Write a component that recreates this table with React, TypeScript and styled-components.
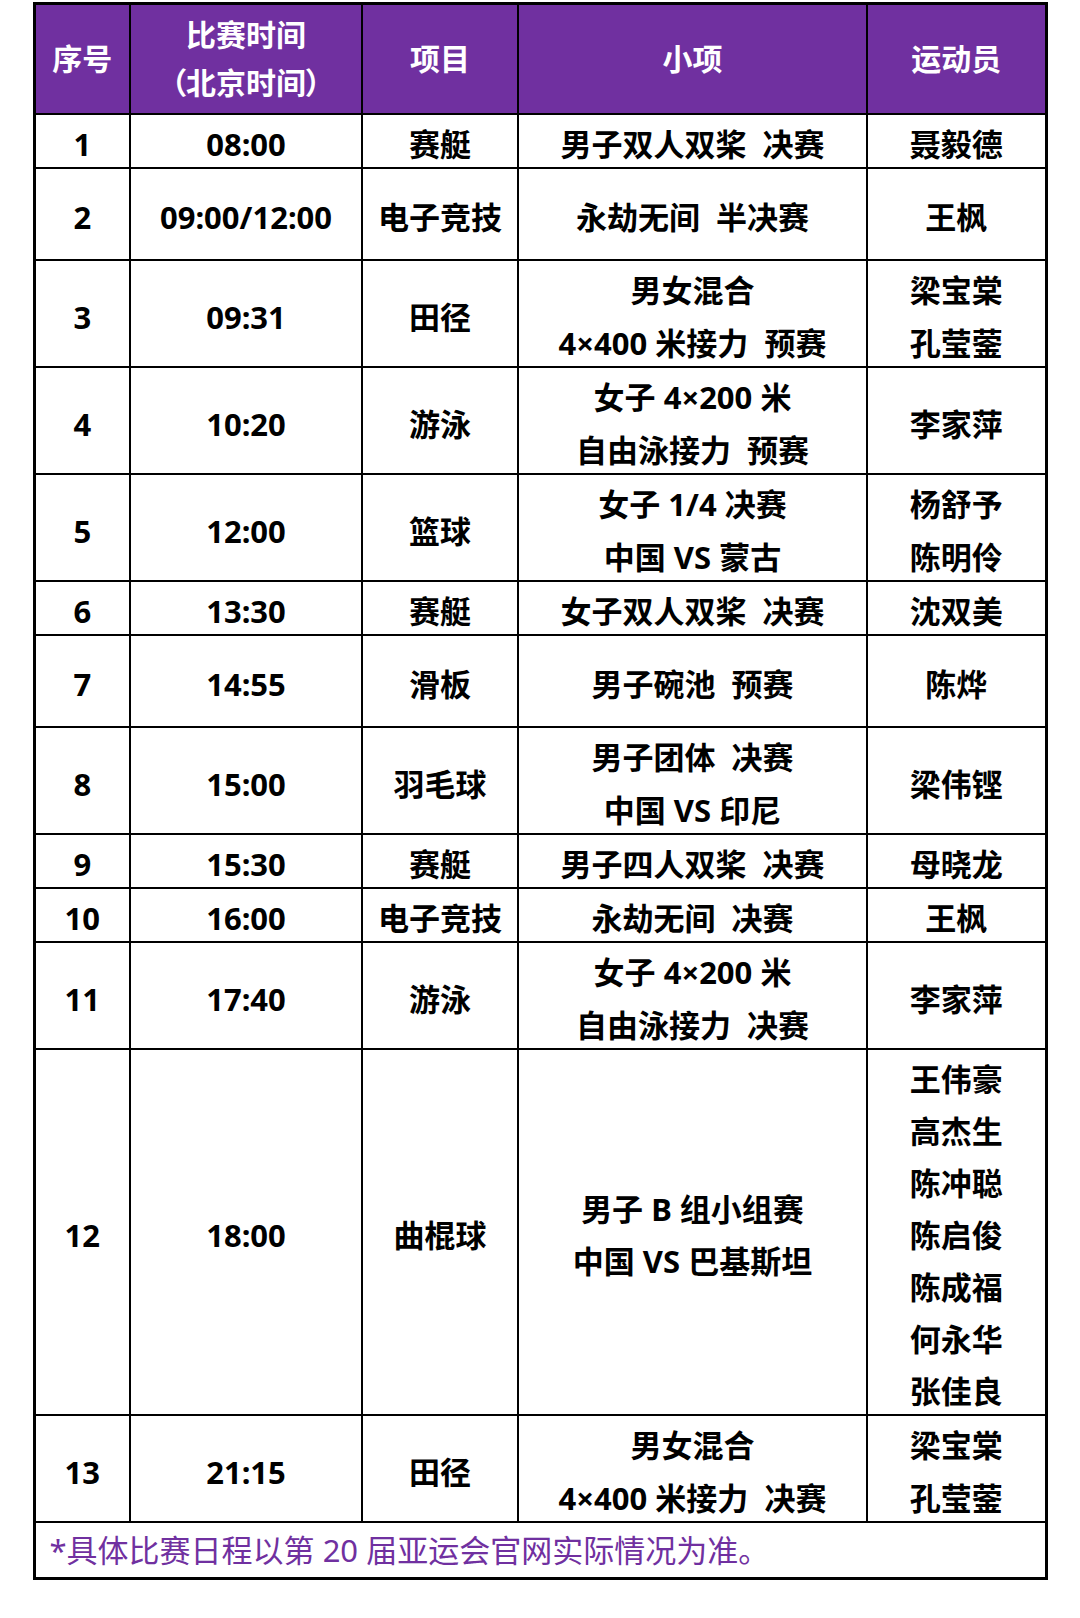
import React from 'react';
import styled, { createGlobalStyle } from 'styled-components';

const PURPLE = '#7030a0';

const GlobalStyle = createGlobalStyle`
    html, body {
        margin: 0;
        padding: 0;
        background: #fff;
    }
`;

const Page = styled.div`
    width: 1080px;
    min-height: 1618px;
    padding-top: 2px;
    box-sizing: border-box;
`;

const Table = styled.table`
    width: 1012px;
    margin: 0 auto;
    border-collapse: collapse;
    table-layout: fixed;
    border: 3px solid #000;
    font-family: 'Noto Sans', 'Noto Sans CJK SC', sans-serif;
`;

const Col = styled.col<{ $width: number }>`
    width: ${({ $width }) => $width}px;
`;

const HeadCell = styled.th`
    height: 108px;
    padding: 0;
    border: 2px solid #000;
    background: ${PURPLE};
    color: #fff;
    font-size: 30px;
    font-weight: 700;
    line-height: 48px;
    text-align: center;
    vertical-align: middle;
`;

/* full-width brackets squeezed to half width, as in the source table */
const Bracket = styled.span`
    font-feature-settings: 'palt';
`;

const Cell = styled.td<{ $tall?: boolean }>`
    height: ${({ $tall }) => ($tall ? '90px' : 'auto')};
    padding: 0;
    border: 2px solid #000;
    color: #000;
    font-size: 31px;
    font-weight: 700;
    text-align: center;
    vertical-align: middle;
    white-space: pre;
`;

/* one text line of a body cell: fixed slot, glyphs sit a little low */
const Line = styled.span<{ $slot?: number }>`
    display: block;
    box-sizing: border-box;
    height: ${({ $slot = 52 }) => $slot}px;
    padding-top: 6px;
    line-height: ${({ $slot = 52 }) => $slot - 6}px;
`;

const HeadLine = styled.span`
    display: block;
`;

const NoteCell = styled.td`
    height: 54px;
    padding: 0 14px;
    border: 2px solid #000;
    color: ${PURPLE};
    font-size: 31px;
    font-weight: 400;
    line-height: 52px;
    text-align: left;
    vertical-align: middle;
    white-space: pre;
`;

type Row = {
    no: string;
    time: string;
    sport: string;
    event: string[];
    athletes: string[];
    tall?: boolean;
};

const rows: Row[] = [
    { no: '1', time: '08:00', sport: '赛艇', event: ['男子双人双桨  决赛'], athletes: ['聂毅德'] },
    { no: '2', time: '09:00/12:00', sport: '电子竞技', event: ['永劫无间  半决赛'], athletes: ['王枫'], tall: true },
    { no: '3', time: '09:31', sport: '田径', event: ['男女混合', '4×400 米接力  预赛'], athletes: ['梁宝棠', '孔莹蓥'] },
    { no: '4', time: '10:20', sport: '游泳', event: ['女子 4×200 米', '自由泳接力  预赛'], athletes: ['李家萍'] },
    { no: '5', time: '12:00', sport: '篮球', event: ['女子 1/4 决赛', '中国 VS 蒙古'], athletes: ['杨舒予', '陈明伶'] },
    { no: '6', time: '13:30', sport: '赛艇', event: ['女子双人双桨  决赛'], athletes: ['沈双美'] },
    { no: '7', time: '14:55', sport: '滑板', event: ['男子碗池  预赛'], athletes: ['陈烨'], tall: true },
    { no: '8', time: '15:00', sport: '羽毛球', event: ['男子团体  决赛', '中国 VS 印尼'], athletes: ['梁伟铿'] },
    { no: '9', time: '15:30', sport: '赛艇', event: ['男子四人双桨  决赛'], athletes: ['母晓龙'] },
    { no: '10', time: '16:00', sport: '电子竞技', event: ['永劫无间  决赛'], athletes: ['王枫'] },
    { no: '11', time: '17:40', sport: '游泳', event: ['女子 4×200 米', '自由泳接力  决赛'], athletes: ['李家萍'] },
    {
        no: '12',
        time: '18:00',
        sport: '曲棍球',
        event: ['男子 B 组小组赛', '中国 VS 巴基斯坦'],
        athletes: ['王伟豪', '高杰生', '陈冲聪', '陈启俊', '陈成福', '何永华', '张佳良'],
    },
    { no: '13', time: '21:15', sport: '田径', event: ['男女混合', '4×400 米接力  决赛'], athletes: ['梁宝棠', '孔莹蓥'] },
];

const Lines = ({ items }: { items: string[] }) => (
    <>
        {items.map((text, i) => (
            <Line key={i} $slot={items.length === 2 ? 52.5 : 52}>
                {text}
            </Line>
        ))}
    </>
);

export default function App() {
    return (
        <Page>
            <GlobalStyle />
            <Table>
                <colgroup>
                    <Col $width={96} />
                    <Col $width={232} />
                    <Col $width={156} />
                    <Col $width={349} />
                    <Col $width={179} />
                </colgroup>
                <thead>
                    <tr>
                        <HeadCell>序号</HeadCell>
                        <HeadCell>
                            <HeadLine>比赛时间</HeadLine>
                            <HeadLine>
                                <Bracket>（</Bracket>北京时间<Bracket>）</Bracket>
                            </HeadLine>
                        </HeadCell>
                        <HeadCell>项目</HeadCell>
                        <HeadCell>小项</HeadCell>
                        <HeadCell>运动员</HeadCell>
                    </tr>
                </thead>
                <tbody>
                    {rows.map((row) => (
                        <tr key={row.no}>
                            <Cell $tall={row.tall}>
                                <Line>{row.no}</Line>
                            </Cell>
                            <Cell $tall={row.tall}>
                                <Line>{row.time}</Line>
                            </Cell>
                            <Cell $tall={row.tall}>
                                <Line>{row.sport}</Line>
                            </Cell>
                            <Cell $tall={row.tall}>
                                <Lines items={row.event} />
                            </Cell>
                            <Cell $tall={row.tall}>
                                <Lines items={row.athletes} />
                            </Cell>
                        </tr>
                    ))}
                    <tr>
                        <NoteCell colSpan={5}>*具体比赛日程以第 20 届亚运会官网实际情况为准。</NoteCell>
                    </tr>
                </tbody>
            </Table>
        </Page>
    );
}
